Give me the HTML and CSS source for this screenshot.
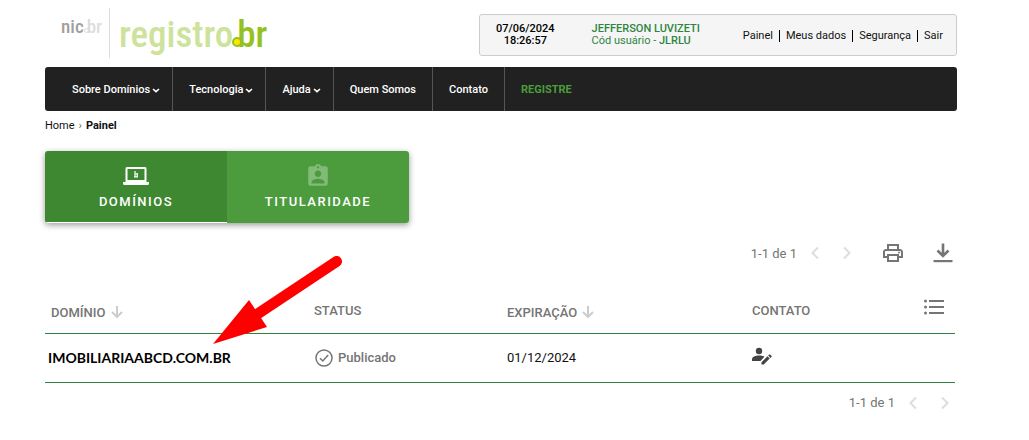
FILE: index.html
```html
<!DOCTYPE html>
<html lang="pt-BR">
<head>
    <meta charset="UTF-8">
    <meta name="viewport" content="width=device-width, initial-scale=1.0">
    <title>Registro.br - Painel</title>
    <link rel="stylesheet" href="styles.css">
</head>
<body>
    <div class="container">
        <header class="header">
            <div class="logos">
                <a class="logo-nic" href="#">nic<span class="dot"></span><span class="br">br</span></a>
                <a class="logo-registro" href="#">registro<span class="dot"></span><span class="br">br</span></a>
            </div>
            <div class="user-box">
                <div class="datetime">07/06/2024<br>18:26:57</div>
                <div class="user"><b>JEFFERSON LUVIZETI</b><br>Cód usuário - <b>JLRLU</b></div>
                <nav class="user-links">
                    <a href="#">Painel</a>
                    <a href="#">Meus dados</a>
                    <a href="#">Segurança</a>
                    <a href="#">Sair</a>
                </nav>
            </div>
        </header>

        <nav class="menu">
            <a class="has-sub" href="#">Sobre Domínios<svg class="caret" viewBox="0 0 8 5"><path d="M1 1 4 3.600 7 1"/></svg></a>
            <a class="has-sub" href="#">Tecnologia<svg class="caret" viewBox="0 0 8 5"><path d="M1 1 4 3.600 7 1"/></svg></a>
            <a class="has-sub" href="#">Ajuda<svg class="caret" viewBox="0 0 8 5"><path d="M1 1 4 3.600 7 1"/></svg></a>
            <a href="#">Quem Somos</a>
            <a href="#">Contato</a>
            <a class="registre" href="#">REGISTRE</a>
        </nav>

        <div class="breadcrumb"><a href="#">Home</a><span>›</span><b>Painel</b></div>

        <div class="tabs">
            <button class="tab active" type="button">
                <svg viewBox="0 0 26 24">
                    <path d="M4 3h18a1.500 1.500 0 0 1 1.500 1.500V18H26v1.500Q26 21 24.500 21h-23Q0 21 0 19.500V18h2.500V4.500A1.500 1.500 0 0 1 4 3zm.5 2v11h17V5z" fill-rule="evenodd"/>
                    <path d="M12 7v6.500M14.200 9v4.500M11 12.900h4M12 10h3" fill="none" stroke="currentColor" stroke-width="1.200"/>
                </svg>
                DOMÍNIOS
            </button>
            <button class="tab" type="button">
                <svg viewBox="0 0 24 24">
                    <path d="M19 3h-4.180C14.400 1.840 13.300 1 12 1s-2.400.84-2.820 2H5c-1.100 0-2 .9-2 2v14c0 1.100.9 2 2 2h14c1.100 0 2-.9 2-2V5c0-1.100-.9-2-2-2zm-7 0c.55 0 1 .45 1 1s-.45 1-1 1-1-.45-1-1 .45-1 1-1zm0 4c1.660 0 3 1.340 3 3s-1.340 3-3 3-3-1.340-3-3 1.340-3 3-3zm6 12H6v-1.400c0-2 4-3.100 6-3.100s6 1.100 6 3.100V19z"/>
                </svg>
                TITULARIDADE
            </button>
        </div>

        <div class="toolbar">
            <span>1-1 de 1</span>
            <button class="page" type="button" aria-label="Anterior"><svg viewBox="0 0 10 14"><path d="M8 1.500 2.500 7 8 12.500"/></svg></button>
            <button class="page" type="button" aria-label="Próxima"><svg viewBox="0 0 10 14"><path d="M2 1.500 7.500 7 2 12.500"/></svg></button>
            <button class="tool" type="button" aria-label="Imprimir">
                <svg viewBox="0 0 24 24"><path d="M19 8h-1V3H6v5H5c-1.660 0-3 1.340-3 3v6h4v4h12v-4h4v-6c0-1.660-1.340-3-3-3zM8 5h8v3H8V5zm8 14H8v-4h8v4zm2-4v-2H6v2H4v-4c0-.55.45-1 1-1h14c.55 0 1 .45 1 1v4h-2z"/><circle cx="18" cy="11.500" r="1"/></svg>
            </button>
            <button class="tool" type="button" aria-label="Baixar">
                <svg viewBox="0 0 24 24"><path d="M12 2.500v12M6.500 9.500l5.500 5.500 5.500-5.500" fill="none" stroke="currentColor" stroke-width="2.600"/><path d="M2.500 19h19v2.200h-19z"/></svg>
            </button>
        </div>

        <table class="domains">
            <thead>
                <tr>
                    <th class="col-domain">DOMÍNIO <svg class="sort" viewBox="0 0 12 12"><path d="M6 0v11M1 6l5 5 5-5"/></svg></th>
                    <th class="col-status plain">STATUS</th>
                    <th class="col-date">EXPIRAÇÃO <svg class="sort" viewBox="0 0 12 12"><path d="M6 0v11M1 6l5 5 5-5"/></svg></th>
                    <th class="plain">CONTATO</th>
                    <th class="col-list">
                        <button class="list" type="button" aria-label="Colunas">
                            <svg viewBox="0 0 20 16"><path d="M5 1h15v2H5zM5 7h15v2H5zM5 13h15v2H5z"/><circle cx="1.500" cy="2" r="1.500"/><circle cx="1.500" cy="8" r="1.500"/><circle cx="1.500" cy="14" r="1.500"/></svg>
                        </button>
                    </th>
                </tr>
            </thead>
            <tbody>
                <tr>
                    <td class="domain">IMOBILIARIAABCD.COM.BR</td>
                    <td class="status"><svg viewBox="0 0 18 18"><circle cx="9" cy="9" r="8"/><path d="M5 9.200l2.800 2.800L13.200 6"/></svg>Publicado</td>
                    <td>01/12/2024</td>
                    <td colspan="2">
                        <button class="contact" type="button" aria-label="Editar contato">
                            <svg viewBox="0 0 20 18"><circle cx="7" cy="4" r="3.200"/><path d="M0 14v-1.500C0 9.500 3.500 8.500 7 8.500c2 0 4 .4 5.400 1.200L8.500 14zM9.500 17.500v-2.200l6-6 2.200 2.200-6 6zM16.200 8.600l1-1q.5-.4 1 0l1.300 1.300q.4.500 0 1l-1 1z"/></svg>
                        </button>
                    </td>
                </tr>
            </tbody>
        </table>

        <div class="toolbar bottom">
            <span>1-1 de 1</span>
            <button class="page" type="button" aria-label="Anterior"><svg viewBox="0 0 10 14"><path d="M8 1.500 2.500 7 8 12.500"/></svg></button>
            <button class="page" type="button" aria-label="Próxima"><svg viewBox="0 0 10 14"><path d="M2 1.500 7.500 7 2 12.500"/></svg></button>
        </div>
    </div>

    <svg class="pointer" viewBox="0 0 130 90">
        <path d="M123.500 5.500 46 57" stroke="#f00" stroke-width="11" stroke-linecap="round"/>
        <path d="M0 88 36 44 54 71z" fill="#f00"/>
    </svg>
</body>
</html>
```
FILE: styles.css
```css
* {
    box-sizing: border-box;
}
body {
    margin: 0;
    background: #fff;
    color: #111;
    font-family: Roboto, sans-serif;
    font-size: 11px;
}
a {
    color: inherit;
    text-decoration: none;
}
b {
    font-weight: 700;
}
svg {
    fill: currentColor;
}
button {
    padding: 0;
    border: none;
    background: none;
    color: inherit;
    font: inherit;
    cursor: pointer;
}
.container {
    padding: 0 72px 0 45px;
}

/* header */
.header {
    display: flex;
    justify-content: space-between;
    height: 67px;
    padding-top: 8px;
}
.logos {
    display: flex;
    height: 50px;
    padding-left: 16px;
    font-family: "Roboto Condensed", "Liberation Sans Narrow", Roboto, sans-serif;
    font-weight: 500;
}
.logo-nic {
    height: 50px;
    padding-right: 7px;
    border-right: 1px solid #ddd;
    color: #a0a09c;
    font-size: 19px;
    line-height: 38px;
}
.logo-nic .br {
    color: #ddd;
}
.logo-registro {
    padding-left: 9px;
    color: #cde29b;
    font-size: 37px;
    line-height: 54px;
}
.logo-registro .br {
    color: #95c11f;
}
.dot {
    display: inline-block;
    width: 5px;
    height: 5px;
    margin-right: -2px;
    border: 1px solid #ddd;
    border-radius: 50%;
}
.logo-registro .dot {
    position: relative;
    width: 10px;
    height: 10px;
    margin-right: -5px;
    margin-left: -1px;
    border: 2px solid #95c11f;
    background: #ffe600;
}
.user-box {
    display: flex;
    align-items: center;
    width: 478px;
    height: 42px;
    margin-top: 6px;
    padding: 0 13px 0 16px;
    border: 1px solid #ccc;
    border-radius: 3px;
    background: #f5f5f5;
    line-height: 12px;
}
.datetime {
    color: #000;
    font-weight: 500;
    text-align: center;
}
.user {
    margin-left: 37px;
    color: #2e8540;
}
.user b {
    font-weight: 500;
}
.user-links {
    display: flex;
    margin-left: auto;
    padding-top: 2px;
}
.user-links a + a {
    margin-left: 6px;
    padding-left: 6px;
    border-left: 1px solid #000;
}

/* menu */
.menu {
    display: flex;
    height: 44px;
    padding-left: 11px;
    border-radius: 3px;
    background: #212121;
    color: #fff;
    font-weight: 500;
    line-height: 45px;
}
.menu a {
    padding: 0 16px;
}
.menu .has-sub {
    padding-right: 12px;
}
.menu a + a {
    border-left: 1px solid #555;
}
.menu .registre {
    color: #4b9d3c;
    font-weight: 700;
}
.caret {
    width: 8px;
    height: 5px;
    margin-left: 2px;
    fill: none;
    stroke: #fff;
    stroke-width: 1.6;
}
.breadcrumb {
    padding-top: 7px;
    line-height: 15px;
}
.breadcrumb span {
    margin: 0 4px;
    color: #666;
}

/* tabs */
.tabs {
    display: flex;
    width: 364px;
    height: 72px;
    margin-top: 18px;
    overflow: hidden;
    border-radius: 3px;
    box-shadow: 0 2px 6px rgba(0, 0, 0, 0.4);
}
.tab {
    display: flex;
    flex: 1;
    flex-direction: column;
    align-items: center;
    padding-top: 12px;
    background: #4c9c3e;
    color: #fff;
    font-size: 13px;
    font-weight: 500;
    letter-spacing: 1.5px;
    line-height: 15px;
}
.tab.active {
    border-bottom: 1px solid #fff;
    background: #3f8832;
}
.tab svg {
    width: 26px;
    height: 26px;
    margin-bottom: 5px;
    opacity: 0.3;
}
.tab.active svg {
    opacity: 1;
}

/* list */
.toolbar {
    display: flex;
    align-items: center;
    justify-content: flex-end;
    height: 24px;
    margin-top: 18px;
    padding-right: 2px;
    color: #757575;
    font-size: 13px;
}
.page {
    height: 14px;
    margin-left: 13px;
    color: #ddd;
}
.page + .page {
    margin-left: 22px;
}
.page svg {
    display: block;
    width: 10px;
    height: 14px;
    fill: none;
    stroke: currentColor;
    stroke-width: 2;
}
.tool {
    height: 24px;
    margin-left: 26px;
}
.page + .tool {
    margin-left: 29px;
}
.tool svg {
    display: block;
    width: 24px;
    height: 24px;
}
.domains {
    width: calc(100% - 2px);
    margin-top: 19px;
    border-collapse: collapse;
    table-layout: fixed;
    font-size: 13px;
}
.domains th,
.domains td {
    height: 49px;
    padding: 0 6px;
    border-bottom: 1px solid #2e8540;
    text-align: left;
}
.domains th {
    padding-top: 8px;
    color: #757575;
    font-weight: 500;
}
.domains th.plain {
    padding-top: 4px;
}
.domains .col-domain {
    width: 263px;
}
.domains .col-status {
    width: 193px;
}
.domains .col-date {
    width: 245px;
}
.domains .col-list {
    width: 60px;
    padding: 0 11px 0 0;
    text-align: right;
}
.sort {
    width: 12px;
    height: 12px;
    margin-left: 2px;
    fill: none;
    stroke: #ccc;
    stroke-width: 2;
    vertical-align: -1px;
}
.list svg {
    display: block;
    width: 20px;
    height: 16px;
}
.domains .domain {
    padding-left: 3px;
    color: #000;
    font-family: Lato, sans-serif;
    font-size: 14px;
    font-weight: 700;
}
.status {
    color: #757575;
    font-weight: 500;
}
.status svg {
    width: 18px;
    height: 18px;
    margin: 0 5px 0 1px;
    fill: none;
    stroke: currentColor;
    stroke-width: 1.5;
    vertical-align: -5px;
}
.contact {
    color: #444;
}
.contact svg {
    display: block;
    width: 20px;
    height: 18px;
}
.toolbar.bottom {
    margin-top: 8px;
    padding-right: 7px;
}

/* red arrow over the list */
.pointer {
    position: absolute;
    top: 256px;
    left: 213px;
    width: 130px;
    height: 90px;
    pointer-events: none;
}
```
